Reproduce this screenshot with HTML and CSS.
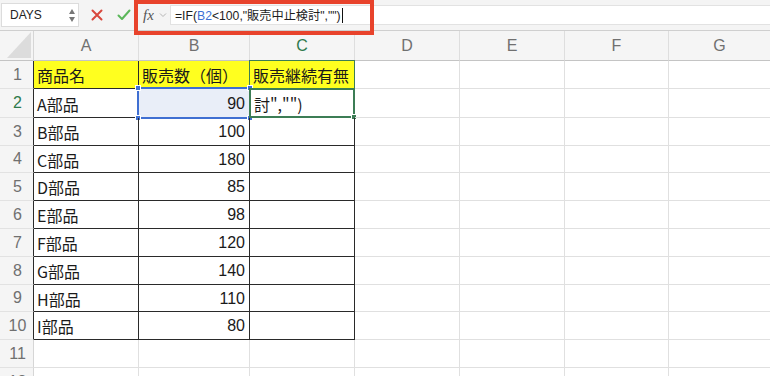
FILE: index.html
```html
<!DOCTYPE html>
<html lang="ja">
<head>
<meta charset="utf-8">
<link rel="stylesheet" href="styles.css">
</head>
<body>
<div class="toolbar">
  <div class="namebox">
    <span class="name">DAYS</span>
    <span class="stepper"><span class="up"></span><span class="down"></span></span>
  </div>
  <div class="actions">
    <svg class="cancel" width="12" height="12" viewBox="0 0 12 12"><path d="M1.5 1.5 L10.5 10.5 M10.5 1.5 L1.5 10.5" stroke="#d8473c" stroke-width="2" stroke-linecap="round"/></svg>
    <svg class="ok" width="14" height="12" viewBox="0 0 14 12"><path d="M1.5 6.5 L5 10 L12.5 1.5" fill="none" stroke="#5bb75a" stroke-width="2" stroke-linecap="round" stroke-linejoin="round"/></svg>
  </div>
  <div class="fxwrap">
    <span class="fx">fx</span>
    <svg class="chev" width="8" height="6" viewBox="0 0 8 6"><path d="M1 1.5 L4 4.5 L7 1.5" fill="none" stroke="#b5b5b5" stroke-width="1"/></svg>
  </div>
  <div class="formula">
    <span>=IF(<span class="ref">B2</span>&lt;100,"販売中止検討","")</span><span class="caret"></span>
  </div>
  <div class="highlight"></div>
</div>

<div class="sheet">
  <div class="corner"><span class="tri"></span></div>
  <div class="colh">A</div>
  <div class="colh">B</div>
  <div class="colh active">C</div>
  <div class="colh">D</div>
  <div class="colh">E</div>
  <div class="colh">F</div>
  <div class="colh last">G</div>

  <div class="rowh t">1</div>
  <div class="cell t y">商品名</div>
  <div class="cell t y">販売数（個）</div>
  <div class="cell t y c1">販売継続有無</div>
  <div class="cell"></div><div class="cell"></div><div class="cell"></div><div class="cell last"></div>

  <div class="rowh t active">2</div>
  <div class="cell t">A部品</div>
  <div class="cell t num sel">90<span class="selbox"><i class="h tl"></i><i class="h tr"></i><i class="h bl"></i><i class="h br"></i></span></div>
  <div class="cell t edit">討","")<span class="actbox"><i class="fill"></i></span></div>
  <div class="cell"></div><div class="cell"></div><div class="cell"></div><div class="cell last"></div>

  <div class="rowh t">3</div>
  <div class="cell t">B部品</div>
  <div class="cell t num">100</div>
  <div class="cell t"></div>
  <div class="cell"></div><div class="cell"></div><div class="cell"></div><div class="cell last"></div>

  <div class="rowh t">4</div>
  <div class="cell t">C部品</div>
  <div class="cell t num">180</div>
  <div class="cell t"></div>
  <div class="cell"></div><div class="cell"></div><div class="cell"></div><div class="cell last"></div>

  <div class="rowh t">5</div>
  <div class="cell t">D部品</div>
  <div class="cell t num">85</div>
  <div class="cell t"></div>
  <div class="cell"></div><div class="cell"></div><div class="cell"></div><div class="cell last"></div>

  <div class="rowh t">6</div>
  <div class="cell t">E部品</div>
  <div class="cell t num">98</div>
  <div class="cell t"></div>
  <div class="cell"></div><div class="cell"></div><div class="cell"></div><div class="cell last"></div>

  <div class="rowh t">7</div>
  <div class="cell t">F部品</div>
  <div class="cell t num">120</div>
  <div class="cell t"></div>
  <div class="cell"></div><div class="cell"></div><div class="cell"></div><div class="cell last"></div>

  <div class="rowh t">8</div>
  <div class="cell t">G部品</div>
  <div class="cell t num">140</div>
  <div class="cell t"></div>
  <div class="cell"></div><div class="cell"></div><div class="cell"></div><div class="cell last"></div>

  <div class="rowh t">9</div>
  <div class="cell t">H部品</div>
  <div class="cell t num">110</div>
  <div class="cell t"></div>
  <div class="cell"></div><div class="cell"></div><div class="cell"></div><div class="cell last"></div>

  <div class="rowh t">10</div>
  <div class="cell t">I部品</div>
  <div class="cell t num">80</div>
  <div class="cell t"></div>
  <div class="cell"></div><div class="cell"></div><div class="cell"></div><div class="cell last"></div>

  <div class="rowh">11</div>
  <div class="cell"></div><div class="cell"></div><div class="cell"></div>
  <div class="cell"></div><div class="cell"></div><div class="cell"></div><div class="cell last"></div>

  <div class="rowh r12">12</div>
  <div class="cell"></div><div class="cell"></div><div class="cell"></div>
  <div class="cell"></div><div class="cell"></div><div class="cell"></div><div class="cell last"></div>
</div>
</body>
</html>
```

FILE: styles.css
```css
* { box-sizing: border-box; }
html, body {
  margin: 0;
  padding: 0;
  width: 770px;
  height: 376px;
  overflow: hidden;
  background: #ffffff;
  font-family: "Liberation Sans", "Noto Sans CJK JP", sans-serif;
}

/* ---------- toolbar ---------- */
.toolbar {
  position: relative;
  height: 31px;
  background: #f4f4f4;
  border-bottom: 1px solid #cfcfcf;
  display: flex;
  align-items: center;
}
.namebox {
  margin-left: 1px;
  width: 78px;
  height: 24px;
  background: #ffffff;
  border: 1px solid #dcdcdc;
  display: flex;
  align-items: center;
  justify-content: space-between;
  padding: 0 3px 0 8px;
}
.name {
  font-size: 12px;
  color: #222;
}
.stepper {
  display: flex;
  flex-direction: column;
  gap: 3px;
}
.stepper .up, .stepper .down {
  width: 0; height: 0;
  border-left: 3.5px solid transparent;
  border-right: 3.5px solid transparent;
}
.stepper .up { border-bottom: 5px solid #777; }
.stepper .down { border-top: 5px solid #777; }

.actions {
  display: flex;
  align-items: center;
  gap: 14px;
  margin-left: 12px;
  width: 50px;
}
.fxwrap {
  display: flex;
  align-items: center;
  gap: 5px;
  width: 29px;
  padding-left: 2px;
}
.fx {
  font-family: "Liberation Serif", serif;
  font-style: italic;
  font-size: 15px;
  color: #555;
}
.formula {
  flex: 1;
  height: 20px;
  background: #ffffff;
  border-top: 1px solid #e2e2e2;
  border-bottom: 1px solid #e2e2e2;
  border-left: 1px solid #e2e2e2;
  display: flex;
  align-items: center;
  padding-left: 4px;
  font-size: 12.2px;
  color: #1d1d1d;
  font-family: "Liberation Sans", "Noto Sans CJK JP", sans-serif;
}
.formula .ref { color: #3d6fd4; }
.caret {
  display: inline-block;
  width: 1px;
  height: 15px;
  background: #111;
  margin-left: 1px;
}
.highlight {
  position: absolute;
  left: 134px;
  top: 0;
  width: 240px;
  height: 35px;
  border: 4px solid #e8432c;
  pointer-events: none;
}

/* ---------- sheet ---------- */
.sheet {
  display: grid;
  grid-template-columns: 34px 105px 111px 105px 105px 105px 104px 1fr;
  grid-template-rows: 30px 28px 29px 28px 27px 28px 28px 28px 28px 27px 28px 28px 28px;
}
.corner {
  background: #f5f5f5;
  border-right: 1px solid #d6d6d6;
  border-bottom: 1px solid #c4c4c4;
  position: relative;
}
.tri {
  position: absolute;
  right: 2px;
  bottom: 2px;
  width: 0; height: 0;
  border-left: 24px solid transparent;
  border-bottom: 26px solid #dcdcdc;
}
.colh {
  background: #f5f5f5;
  border-right: 1px solid #dedede;
  border-bottom: 1px solid #c4c4c4;
  display: flex;
  align-items: center;
  justify-content: center;
  font-size: 16px;
  color: #707070;
  padding-top: 1px;
}
.colh.active { color: #2f7a4c; }
.colh.last { border-right: none; }

.rowh {
  background: #f5f5f5;
  border-right: 1px solid #d6d6d6;
  border-bottom: 1px solid #e2e2e2;
  display: flex;
  align-items: center;
  justify-content: center;
  font-size: 16px;
  color: #707070;
  padding-left: 2px;
}
.rowh.t { border-right-color: #2a2a2a; }
.rowh.active { color: #2f7a4c; }

.cell {
  position: relative;
  border-right: 1px solid #e0e0e0;
  border-bottom: 1px solid #e0e0e0;
  display: flex;
  align-items: center;
  padding: 1px 4px 0 3px;
  font-family: "Noto Sans CJK JP", sans-serif;
  font-size: 16px;
  color: #1a1a1a;
  white-space: nowrap;
  overflow: visible;
}
.cell.last { border-right: none; }
.cell.t {
  border-right-color: #2a2a2a;
  border-bottom-color: #2a2a2a;
}
.cell.y { background: #ffff1f; }
.cell.num {
  justify-content: flex-end;
  font-family: "Liberation Sans", sans-serif;
  font-size: 16px;
}
.cell.sel { background: #e9eef8; }

.selbox {
  position: absolute;
  left: -2px;
  top: -2px;
  right: -2px;
  bottom: -2px;
  border: 2px solid #3f6fd2;
  pointer-events: none;
}
.h {
  position: absolute;
  width: 6px;
  height: 6px;
  background: #3f6fd2;
  border: 1px solid #ffffff;
}
.h.tl { left: -4px; top: -4px; }
.h.tr { right: -4px; top: -4px; }
.h.bl { left: -4px; bottom: -4px; }
.h.br { right: -4px; bottom: -4px; }

.c1::after {
  content: "";
  position: absolute;
  left: -1px;
  top: -1px;
  right: -1px;
  bottom: -1px;
  border: 1px solid #3c7d55;
  pointer-events: none;
}
.actbox {
  position: absolute;
  left: -1px;
  top: -1px;
  right: -1px;
  bottom: -1px;
  border: 2px solid #3c7d55;
  pointer-events: none;
}
.fill {
  position: absolute;
  right: -4px;
  bottom: -4px;
  width: 6px;
  height: 6px;
  background: #3c7d55;
  border: 1px solid #ffffff;
}
.edit { padding-left: 4px; }
```
